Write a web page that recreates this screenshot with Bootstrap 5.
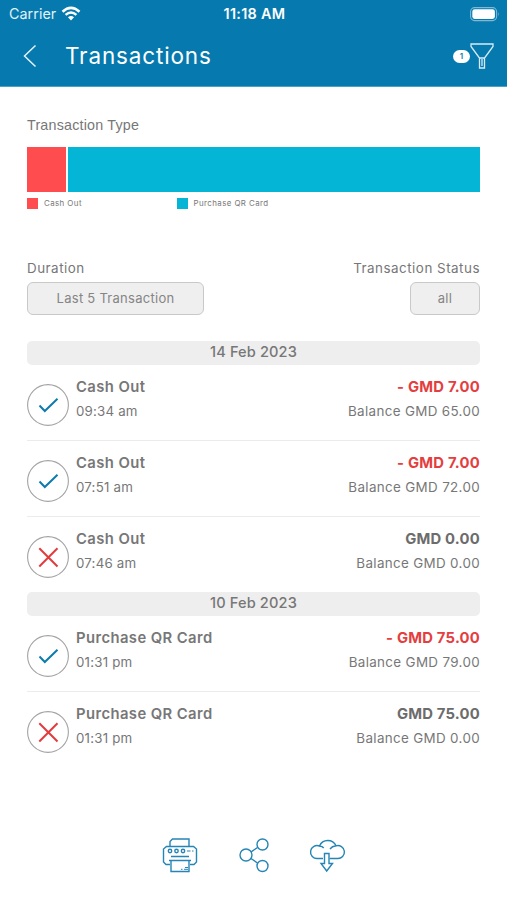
<!DOCTYPE html>
<html lang="en">
<head>
<meta charset="utf-8">
<meta name="viewport" content="width=device-width, initial-scale=1">
<title>Transactions</title>
<link href="https://cdn.jsdelivr.net/npm/bootstrap@5.3.0/dist/css/bootstrap.min.css" rel="stylesheet">
<style>
  body { font-family: Inter, "Open Sans", sans-serif; color: #777; background: #fff; min-height: 900px; }
  svg { display: block; flex: none; }
  .app-head { background: #067aae; height: 87px; border-bottom: 1px solid #4c9fc5; color: #fff; }
  .status-bar { display: grid; grid-template-columns: 1fr auto 1fr; height: 28px; padding: 0 7px 0 9px; }
  .carrier { font-size: 14.3px; line-height: 28px; letter-spacing: .05px; color: #e2f1f8; }
  .clock { font-size: 14.4px; font-weight: 600; line-height: 28px; letter-spacing: .3px; }
  .title-bar { height: 58px; padding: 0 13px 0 23px; }
  .title-bar h1 { font-size: 22.5px; font-weight: 400; line-height: 30px; letter-spacing: .85px; margin: -2px 0 0 28px; }
  .title-bar svg, .count { margin-top: -2px; }
  .count { width: 17px; height: 13px; font-size: 8px; line-height: 13px; font-weight: 600; color: #067aae; background: #fff; }
  main { padding: 27px 27px 0; }
  .type-title { font-family: "Liberation Sans", Arial, sans-serif; font-size: 14.3px; line-height: 22px; letter-spacing: .2px; margin: 0 0 11px; font-weight: 400; }
  .type-bar { height: 45px; gap: 2px; }
  .type-bar > div, .swatch { background: #04b5d6; }
  .type-bar > .cash, .swatch.cash { background: #ff4c4e; }
  .key { width: 149.5px; height: 23px; font-size: 7.9px; letter-spacing: .42px; }
  .swatch { width: 11px; height: 11px; margin-right: 6px; }
  .filters { margin-top: 42px; font-size: 13.4px; line-height: 22px; letter-spacing: .5px; }
  .pick { height: 33px; margin-top: 3px; padding: 0; border: 1px solid #c9c9c9; border-radius: 6px; background: #efefef; color: #858585; font-size: 13px; letter-spacing: .27px; }
  .day { height: 23.5px; line-height: 23px; border-radius: 5px; background: #eee; font-size: 14.6px; font-weight: 500; letter-spacing: .12px; }
  .entry { height: 76px; padding-top: 10px; border-bottom: 1.5px solid #ebebeb; line-height: 24px; }
  .entry.last-entry { border-bottom: 0; height: 75.5px; }
  .entry svg { margin: 9px 7px 0 0; }
  .what { font-size: 14.8px; font-weight: 600; letter-spacing: .42px; }
  .when { font-size: 13.3px; letter-spacing: .2px; }
  .amount { font-size: 14.8px; font-weight: 700; letter-spacing: .22px; color: #6c6c6c; }
  .amount.spent { color: #e43e40; }
  .balance { font-size: 13.4px; letter-spacing: .34px; }
  .actions { margin-top: 69px; gap: 36px; }
</style>
</head>
<body>
<svg width="0" height="0" class="position-absolute" aria-hidden="true">
  <symbol id="ok" viewBox="0 0 42 42"><circle cx="21" cy="21" r="20.4" fill="#fff" stroke="#a3a3a3" stroke-width="1.1"/><path d="M12.500 21.500l5.300 5.500L30.500 14.800" fill="none" stroke="#0e7bad" stroke-width="2"/></symbol>
  <symbol id="fail" viewBox="0 0 42 42"><circle cx="21" cy="21" r="20.4" fill="#fff" stroke="#a3a3a3" stroke-width="1.1"/><path d="M12.300 12.300l18.200 18.200M30.500 12.300L12.300 30.500" fill="none" stroke="#e23b3e" stroke-width="2"/></symbol>
</svg>

<header class="app-head">
  <div class="status-bar">
    <div class="d-flex align-items-center"><span class="carrier">Carrier</span>
      <svg style="margin-left:5px" width="20" height="16" viewBox="0 0 20 16" fill="none" stroke="#fff" stroke-width="2.5"><path d="M1.500 5.700Q10 -2 18.500 5.700M4.600 8.900Q10 4 15.400 8.900"/><path d="M10 14.500l-3-3.300q3-2.500 6 0z" fill="#fff" stroke="none"/></svg>
    </div>
    <div class="clock">11:18 AM</div>
    <div class="d-flex align-items-center justify-content-end">
      <svg width="30" height="15" viewBox="0 0 30 15"><rect x=".6" y=".6" width="26" height="13" rx="4" fill="none" stroke="#7fb9d5" stroke-width="1.100"/><rect x="2.300" y="2.300" width="22.600" height="9.600" rx="2.400" fill="#fff"/><path d="M28.200 5v4.500q1.500-2.200 0-4.500" fill="#7fb9d5"/></svg>
    </div>
  </div>
  <div class="title-bar d-flex align-items-center">
    <svg width="14" height="24" viewBox="0 0 14 24" fill="none" stroke="#e5f3f9" stroke-width="1.500"><path d="M12.500 1.500L1.500 12l11 10.500"/></svg>
    <h1>Transactions</h1>
    <span class="count rounded-pill text-center ms-auto">1</span>
    <svg width="24" height="26" viewBox="0 0 24 26" fill="none" stroke="#d7ebf4" stroke-width="1.300"><path d="M1 1h22v2.500L14.500 15v10h-5V15L1 3.500zM9.500 15h5M12 16v7"/></svg>
  </div>
</header>

<main>
  <h2 class="type-title">Transaction Type</h2>
  <div class="type-bar d-flex"><div class="cash" style="width:8.700%"></div><div class="flex-fill"></div></div>
  <div class="d-flex">
    <div class="key d-flex align-items-center"><span class="swatch cash"></span>Cash Out</div>
    <div class="key d-flex align-items-center"><span class="swatch"></span>Purchase QR Card</div>
  </div>

  <div class="filters d-flex justify-content-between">
    <div><div>Duration</div><button class="pick btn d-block" style="width:177px">Last 5 Transaction</button></div>
    <div class="text-end"><div>Transaction Status</div><button class="pick btn d-block ms-auto" style="width:70px">all</button></div>
  </div>

  <section style="margin-top:26px">
    <div class="day text-center">14 Feb 2023</div>
    <div class="entry d-flex"><svg width="42" height="42"><use href="#ok"/></svg>
      <div><div class="what">Cash Out</div><div class="when">09:34 am</div></div>
      <div class="ms-auto text-end"><div class="amount spent">- GMD 7.00</div><div class="balance">Balance GMD 65.00</div></div></div>
    <div class="entry d-flex"><svg width="42" height="42"><use href="#ok"/></svg>
      <div><div class="what">Cash Out</div><div class="when">07:51 am</div></div>
      <div class="ms-auto text-end"><div class="amount spent">- GMD 7.00</div><div class="balance">Balance GMD 72.00</div></div></div>
    <div class="entry last-entry d-flex"><svg width="42" height="42"><use href="#fail"/></svg>
      <div><div class="what">Cash Out</div><div class="when">07:46 am</div></div>
      <div class="ms-auto text-end"><div class="amount">GMD 0.00</div><div class="balance">Balance GMD 0.00</div></div></div>
  </section>
  <section>
    <div class="day text-center">10 Feb 2023</div>
    <div class="entry d-flex"><svg width="42" height="42"><use href="#ok"/></svg>
      <div><div class="what">Purchase QR Card</div><div class="when">01:31 pm</div></div>
      <div class="ms-auto text-end"><div class="amount spent">- GMD 75.00</div><div class="balance">Balance GMD 79.00</div></div></div>
    <div class="entry last-entry d-flex"><svg width="42" height="42"><use href="#fail"/></svg>
      <div><div class="what">Purchase QR Card</div><div class="when">01:31 pm</div></div>
      <div class="ms-auto text-end"><div class="amount">GMD 75.00</div><div class="balance">Balance GMD 0.00</div></div></div>
  </section>

  <div class="actions d-flex justify-content-center">
    <svg width="38" height="38" viewBox="0 0 38 38" fill="none" stroke="#2585b5" stroke-width="1.400">
      <path d="M9 10V5.500L11.500 3H28v7M9 28.500H5L2.500 26V13L5.500 10.500h27L35.500 13v13L33 28.500h-4"/>
      <path d="M8 24.500h22M10 24.500v11h18v-11M10 20.500h18"/><path d="M26 15h3.500M31 15h1.500M20 33.300h1.500M23 33.300h4M24 31.500h3" stroke-width="1"/>
      <circle cx="9" cy="15" r="1.700"/><circle cx="15.500" cy="15" r="1.700"/><circle cx="22" cy="15" r="1.700"/>
    </svg>
    <svg width="38" height="38" viewBox="0 0 38 38" fill="none" stroke="#2585b5" stroke-width="1.400">
      <circle cx="11" cy="19" r="6"/><circle cx="27.500" cy="8.500" r="5.500"/><circle cx="27.500" cy="30" r="5.500"/>
      <path d="M16.200 15.800l6.300-4.300M16 22.500l6.500 4.500"/>
    </svg>
    <svg width="38" height="38" viewBox="0 0 38 38" fill="none" stroke="#2585b5" stroke-width="1.400">
      <path d="M14 22.500H8.500a6.500 6.500 0 1 1 2-12.500A9 9 0 0 1 27 9.800a6.500 6.500 0 1 1 1.500 12.700H20.500M10.500 10q3 .2 4.200 2M21 13q2-2.800 6-3.200"/>
      <path d="M15.500 17.500h4.500v10h3.500L17.700 35 12 27.500h3.500z"/>
    </svg>
  </div>
</main>
<script src="https://cdn.jsdelivr.net/npm/bootstrap@5.3.0/dist/js/bootstrap.bundle.min.js"></script>
</body>
</html>
